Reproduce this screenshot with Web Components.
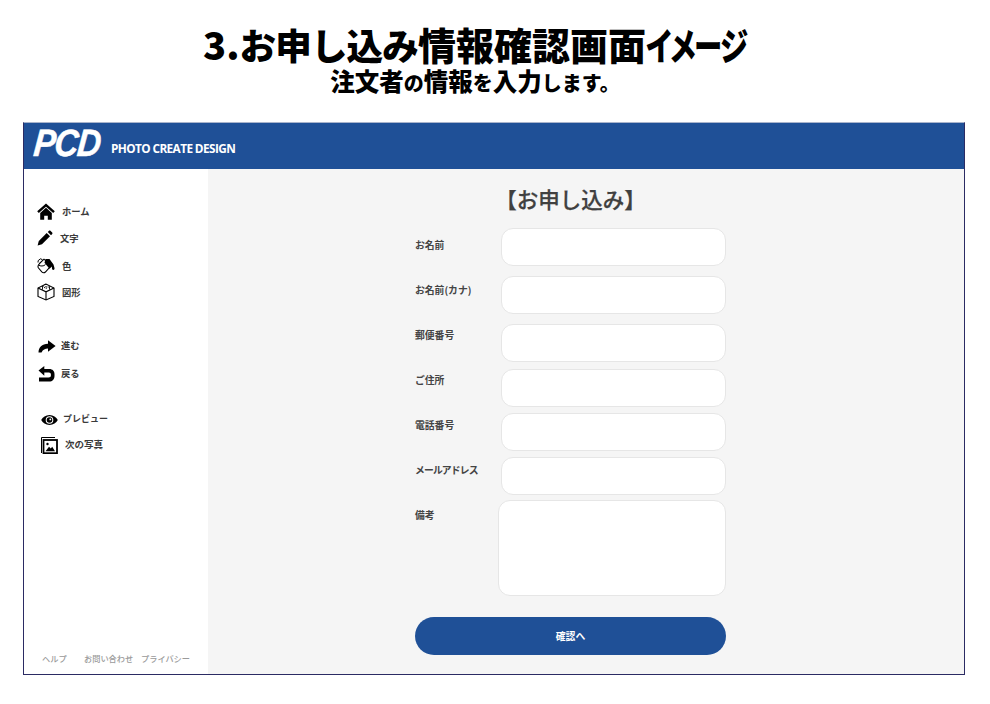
<!DOCTYPE html>
<html lang="ja"><head><meta charset="utf-8"><title>お申し込み情報確認画面</title>
<style>
html,body{margin:0;padding:0;background:#fff}
body{width:990px;height:704px;overflow:hidden;font-family:"Noto Sans CJK JP","Noto Sans",sans-serif}
.kana{font-size:36.500px;letter-spacing:-.8px}
.kata{display:inline-block;font-feature-settings:'palt';letter-spacing:-1.500px;width:101px;text-align:left;white-space:nowrap;transform:scaleX(.745);transform-origin:left center;vertical-align:baseline}
.sk{font-size:20px}
</style></head><body>
<page-title><span slot="main">3.<span class="kana">お申し込み</span>情報確認画面<span class="kata">イメージ</span></span><span slot="sub">注文者<span class="sk">の</span>情報<span class="sk">を</span>入力<span class="sk">します。</span></span></page-title>
<app-frame>
  <app-header slot="header"></app-header>
  <side-nav slot="side">
    <nav-item style="--mt:0;--ml:13px;--w:18px;--gap:7px"><svg viewBox="0 0 18 17" width="18" height="17"><path d="M1 9.200 9 2l8 7.200" fill="none" stroke="#000" stroke-width="2.400"/><path d="M3.200 10 9 4.800l5.800 5.200v6.800h-4v-4H7.200v4h-4z"/></svg>ホーム</nav-item>
    <nav-item style="--mt:7px;--ml:13px;--w:16px;--gap:7px"><svg viewBox="0 0 16 16" width="16" height="16"><path d="M.6 15.400 1.800 11 9.700 3l3.300 3.300L5 14.200z"/><path d="M10.800 1.900 12 .8c.5-.4 1-.4 1.400 0l1.800 1.800c.4.4.4 1 0 1.400L14 5.200z"/></svg>文字</nav-item>
    <nav-item style="--mt:8px;--ml:13px;--w:18px;--gap:7px"><svg viewBox="0 0 18 17" width="18" height="17"><path d="M2.500 5.500 7 1.200l7 6.600-5.600 6.200c-1.200 1-2.600.8-3.600-.2L1.500 10c-.7-.9-.6-2 0-3z" fill="#fff" stroke="#000" stroke-width="1.100"/><path d="M1.700 7c1.500 1.400 5 1.500 6.800-.5" fill="none" stroke="#000" stroke-width="1"/><path d="M8.500 1h4l4 5.500 1 3.500c.2 1.200-.4 2-1.200 2s-1.300-.8-1.300-1.700l-.3-1.800-2.200 2.200-5-6z"/><path d="M5.500 1.700 3.500.8 1.200 2.600 1 4.500" fill="none" stroke="#000" stroke-width="1"/></svg>色</nav-item>
    <nav-item style="--mt:6px;--ml:13px;--w:18px;--gap:7px"><svg viewBox="0 0 18 18" width="18" height="18" fill="none" stroke="#000" stroke-width="1.100"><path d="M9 1 1 5v8.500L9 17l8-3.500V5z"/><path d="M1 5l8 3.800L17 5M9 8.800V17"/><path d="M5.500 3.200 9 5.200l3.500-2" stroke-dasharray="1 1"/><path d="M9 1v4.200" stroke-dasharray="1 1"/><path d="M5.500 3.200v3.400M12.500 3.200v3.400" stroke-width=".9"/></svg>図形</nav-item>
    <nav-item style="--mt:33px;--ml:14px;--w:18px;--gap:5px"><svg viewBox="0 0 18 14" width="18" height="14" style="margin-top:3px"><path d="M.5 12.500C.5 7.500 4 4 10 3.800V.3L17.600 6 10 11.700V8.500C7 8.500 5 9.500 3.500 12.500z"/></svg>進む</nav-item>
    <nav-item style="--mt:8px;--ml:14px;--w:17px;--gap:6px"><svg viewBox="0 0 17 16" width="17" height="16" style="margin-top:2px"><path d="M.5 4.600 6.300 0v3h5c3.300 0 5.200 2.200 5.200 5.200v1.700c0 3.300-2.200 5.600-5.200 5.600H1v-4h9.500c1.600 0 2.400-.7 2.400-2V8.500c0-1.300-.8-2-2-2H6.300v3.300z"/></svg>戻る</nav-item>
    <nav-item style="--mt:26px;--ml:17px;--w:17px;--gap:5px;--fs:9px"><svg viewBox="0 0 17 12" width="17" height="12" style="margin-top:1px"><path fill-rule="evenodd" d="M8.500 1C12.300 1 15.300 3.200 16.800 6c-1.500 2.800-4.500 5-8.300 5S1.700 8.800.2 6C1.700 3.200 4.700 1 8.500 1zm0 1.200a3.800 3.800 0 1 0 0 7.600 3.800 3.800 0 0 0 0-7.600zm0 1a2.800 2.800 0 1 1 0 5.600 2.800 2.800 0 0 1 0-5.600zm.8 1.300a.9.900 0 1 0 0 1.800.9.900 0 0 0 0-1.800z"/></svg>プレビュー</nav-item>
    <nav-item style="--mt:5px;--ml:17px;--w:17px;--gap:7px;--fs:9.500px"><svg viewBox="0 0 17 17" width="17" height="17" style="margin-top:2px"><path d="M.5.5H14" fill="none" stroke="#000" stroke-width="1"/><path d="M.5.5V16" fill="none" stroke="#000" stroke-width="1"/><rect x="2.500" y="3" width="13.500" height="13.200" fill="#fff" stroke="#000" stroke-width="1.800"/><circle cx="6.500" cy="7" r="1.200"/><path d="M4.500 14.200 8 9.800l1.800 1.800 1.400-1.800 2.800 4.400z"/></svg>次の写真</nav-item>
    <side-foot slot="foot"></side-foot>
  </side-nav>
  <order-form slot="main"></order-form>
</app-frame>
<script>
function def(name, css, html){
  customElements.define(name, class extends HTMLElement{
    constructor(){super();const r=this.attachShadow({mode:'open'});r.innerHTML='<style>'+css+'</style>'+html;}
  });
}
const JP='"Noto Sans CJK JP","Noto Sans",sans-serif';
def('page-title',`
  :host{display:block;height:122px;text-align:center;color:#000;font-family:${JP};font-weight:900;box-sizing:border-box;padding-top:22px}
  .m{display:block;font-size:38px;line-height:44px;height:44px;transform:translateX(-20px)}
  .s{display:block;font-size:24.500px;line-height:26px;margin-top:2px;transform:translateX(-20px)}
`,`<span class="m"><slot name="main"></slot></span><span class="s"><slot name="sub"></slot></span>`);
def('app-frame',`
  :host{display:flex;flex-direction:column;box-sizing:border-box;width:942px;height:553px;margin-left:23px;border:1px solid #2b2b63;border-top-color:#a9b4cc}
  .b{flex:1;display:flex;min-height:0}
`,`<slot name="header"></slot><div class="b"><slot name="side"></slot><slot name="main"></slot></div>`);
def('app-header',`
  :host{display:flex;align-items:flex-end;height:46px;flex:none;background:#1f5097;color:#fff;padding-left:10px}
  .l{font:italic 700 38px/46px "Liberation Sans",sans-serif;letter-spacing:-1.500px;display:block;-webkit-text-stroke:.5px #fff;transform:scaleX(.87) skewX(-6deg);transform-origin:left;width:77px;position:relative;top:-3px}
  .t{font:700 11.800px/16px "Open Sans",sans-serif;letter-spacing:-.6px;margin-bottom:13px}
`,`<span class="l">PCD</span><span class="t">PHOTO CREATE DESIGN</span>`);
def('side-nav',`
  :host{display:flex;flex-direction:column;width:184px;flex:none;background:#fff;box-sizing:border-box;padding:32px 0 10px}
  .f{margin-top:auto}
`,`<slot></slot><div class="f"><slot name="foot"></slot></div>`);
def('nav-item',`
  :host{display:flex;align-items:center;height:20px;margin-top:var(--mt,0);padding-left:var(--ml,13px);gap:var(--gap,7px);font:700 var(--fs,9.300px)/20px ${JP};color:#3a3a3a}
  ::slotted(svg){flex:none}
`,`<slot></slot>`);
def('side-foot',`
  :host{display:flex;font:500 8.200px/12px ${JP};color:#9a9a9a;padding-left:18px}
  span:nth-of-type(1){width:42px}span:nth-of-type(2){width:57px}
`,`<span>ヘルプ</span><span>お問い合わせ</span><span>プライバシー</span>`);
def('form-field',`
  :host{display:block;box-sizing:border-box;width:225px;height:38px;margin-top:var(--mt,0)}
  input{display:block;width:100%;height:100%;box-sizing:border-box;margin:0;border:1px solid #e6e6e6;border-radius:12px;background:#fff;outline:0;padding:0 10px}
`,`<input type="text">`);
def('field-area',`
  :host{display:block;box-sizing:border-box;width:228px;height:96px;margin-top:5px}
  textarea{display:block;width:100%;height:100%;box-sizing:border-box;margin:0;border:1px solid #e6e6e6;border-radius:12px;background:#fff;outline:0;resize:none}
`,`<textarea></textarea>`);
def('order-form',`
  :host{display:block;flex:1;background:#f5f5f5;box-sizing:border-box;padding:15px 0 0 207px}
  .w{width:311px;display:flex;flex-direction:column}
  h2{margin:0;height:30px;font:500 21.500px/30px ${JP};-webkit-text-stroke:.25px #404040;color:#404040;text-align:center}
  .c{display:flex;justify-content:space-between;margin-top:8px}
  .ls{display:flex;flex-direction:column;padding-top:1px}
  .ls span{height:45px;font:700 9.800px/45px ${JP};color:#444}
  .ls .k{letter-spacing:-.85px}
  .is{display:flex;flex-direction:column;align-items:flex-end;padding-top:6px}
  button{display:block;width:311px;height:38px;margin-top:21px;border:0;border-radius:19px;background:#1f5097;color:#fff;font:700 9.800px/38px ${JP};padding:0}
`,`<div class="w"><h2>【お申し込み】</h2>
  <div class="c">
    <div class="ls"><span>お名前</span><span>お名前(カナ)</span><span>郵便番号</span><span>ご住所</span><span>電話番号</span><span class="k">メールアドレス</span><span>備考</span></div>
    <div class="is">
      <form-field></form-field>
      <form-field style="--mt:10px"></form-field>
      <form-field style="--mt:10px"></form-field>
      <form-field style="--mt:7px"></form-field>
      <form-field style="--mt:6px"></form-field>
      <form-field style="--mt:6px"></form-field>
      <field-area></field-area>
    </div>
  </div>
  <button type="button">確認へ</button></div>`);
</script>
</body></html>
